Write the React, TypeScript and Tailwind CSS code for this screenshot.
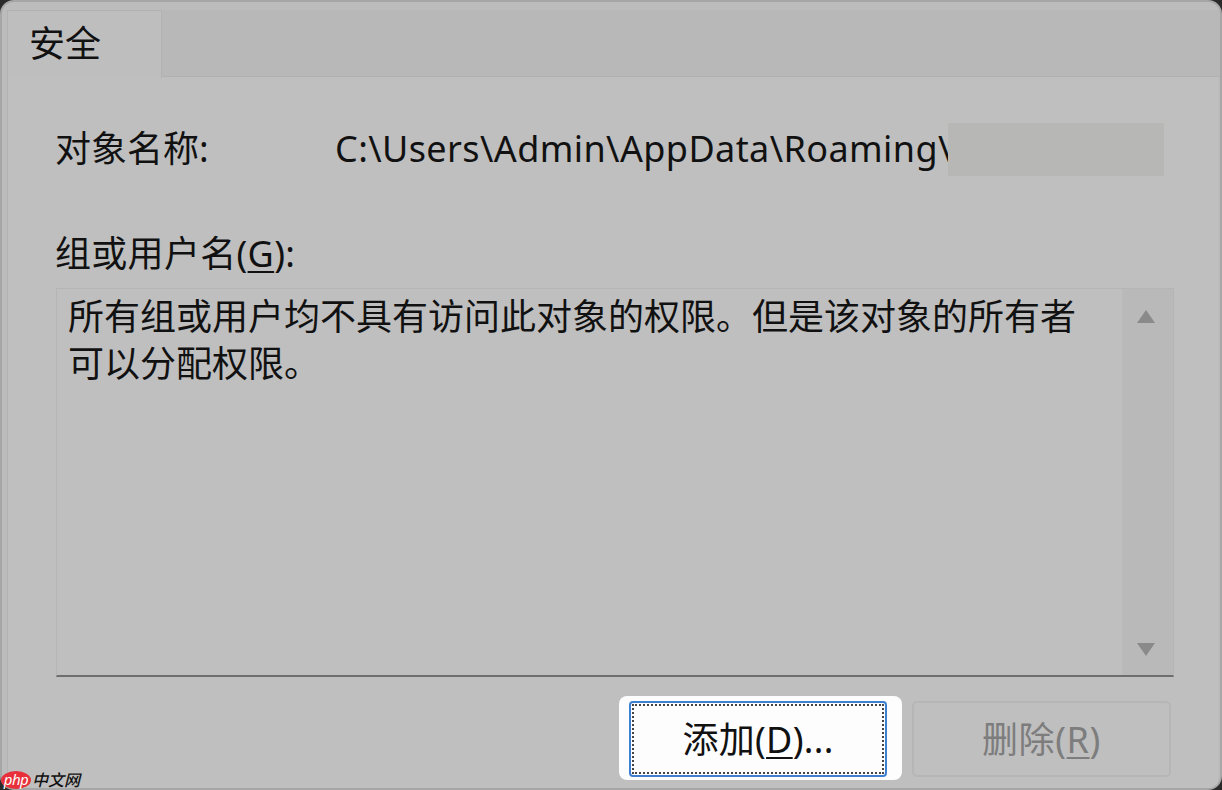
export default function App() {
  const font = { fontFamily: '"Noto Sans", "Noto Sans CJK SC", sans-serif' };
  return (
    <div style={font} className="relative w-[1222px] h-[790px] bg-[#2a2a2a] overflow-hidden">
      <div className="w-full h-full rounded-[14px] border-2 border-[#a6a6a6] bg-[#bcbcbc] pl-[5px] pr-[2px] pt-[8px] flex flex-col overflow-hidden">
        <div className="flex h-[67px] shrink-0 items-stretch bg-[#b8b8b8] -mr-[2px]">
          <div className="w-[155px] h-[68px] z-10 bg-[#bebebe] border-t border-l border-r border-[#b2b2b2] pl-[21px] pt-[8px] text-[36px] leading-[50px] text-[#111] font-normal">
            安全
          </div>
          <div className="flex-1 border-b border-[#b0b0b0]" />
        </div>
        <div className="flex-1 border-l border-[#b2b2b2] bg-[#bfbfbf] pl-[48px] pr-[44px] flex flex-col">
          <div className="flex items-center h-[53px] mt-[46px] text-[36px] leading-[49px] text-[#111]">
            <span className="-ml-[1px] w-[280px] shrink-0 pb-[3px]">对象名称:</span>
            <span className="tracking-[0.4px] whitespace-nowrap w-[613px] shrink-0 pb-[3px]">C:\Users\Admin\AppData\Roaming\</span>
            <span className="relative z-10 w-[216px] h-[53px] bg-[#b7b8b5]" />
          </div>
          <div className="-ml-[1px] mt-[57px] h-[42px] leading-[42px] text-[36px] tracking-[0.3px] text-[#111] whitespace-nowrap">
            组或用户名(<span className="underline underline-offset-4 decoration-2">G</span>):
          </div>
          <div className="mt-[13px] w-[1118px] h-[389px] flex border border-[#b5b5b5] border-b-2 border-b-[#6e6e6e] bg-[#bfbfbf]">
            <div className="flex-1 pl-[11px] pt-[4px] text-[36px] leading-[47px] text-[#111]">
              <div className="whitespace-nowrap">所有组或用户均不具有访问此对象的权限。但是该对象的所有者</div>
              <div className="whitespace-nowrap">可以分配权限。</div>
            </div>
            <div className="w-[51px] shrink-0 bg-[#b9b9b9] flex flex-col items-center justify-between pr-[3px] pt-[21px] pb-[19px]">
              <svg width="18" height="13" viewBox="0 0 18 13"><path d="M9 0 L18 13 L0 13 Z" fill="#8a8a8a" /></svg>
              <svg width="18" height="13" viewBox="0 0 18 13"><path d="M0 0 L18 0 L9 13 Z" fill="#8a8a8a" /></svg>
            </div>
          </div>
          <div className="mt-[19px] flex items-start w-[1118px]">
            <div className="ml-[563px] w-[283px] h-[84px] rounded-[8px] bg-[#fdfdfd] pl-[10px] pt-[5px]">
              <div className="w-[258px] h-[76px] rounded-[4px] border-2 border-[#3d7fd0] bg-[#fdfdfd] p-[1px]">
                <div className="w-full h-full border-2 border-dotted border-[#444] flex items-center justify-center text-[36px] tracking-[0.3px] text-[#111] pt-[2px]">
                  添加(<span className="underline underline-offset-4 decoration-2">D</span>)...
                </div>
              </div>
            </div>
            <div className="ml-[10px] mt-[5px] w-[259px] h-[76px] rounded-[5px] border-2 border-[#b6b6b6] flex items-center justify-center text-[36px] tracking-[0.6px] text-[#7d7d7d] pt-[2px]">
              删除(<span className="underline underline-offset-4 decoration-2">R</span>)
            </div>
          </div>
        </div>
      </div>
      <div className="absolute left-[1px] bottom-[1px] flex items-center gap-[1px]">
        <div className="w-[30px] h-[18px] rounded-[50%] bg-[#e8303a] flex items-center justify-center text-[15px] leading-none italic text-white tracking-[-0.5px] pb-[2px]">php</div>
        <div className="text-[16px] leading-none italic text-[#111] font-medium">中文网</div>
      </div>
    </div>
  );
}
